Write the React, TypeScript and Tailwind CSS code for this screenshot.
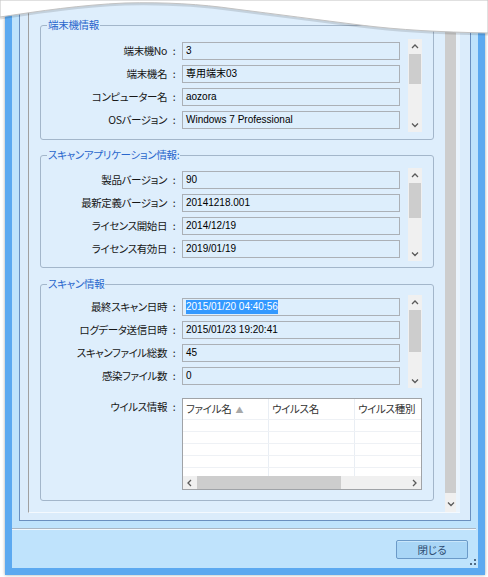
import React from "react";

const JP = "font-['Noto_Sans_CJK_JP',sans-serif] [font-feature-settings:'palt']";
const LABEL = `${JP} text-[10.5px] leading-[18px] tracking-[-0.4px] text-[#161616] whitespace-nowrap`;
const VALUE = "font-['Liberation_Sans','Noto_Sans_CJK_JP',sans-serif] text-[10px] leading-[14px] whitespace-nowrap";

type Dir = "up" | "down" | "left" | "right";

const Chevron: React.FC<{ dir: Dir }> = ({ dir }) => {
    const pts = {
        up: "1,5 4,2 7,5",
        down: "1,2.5 4,5.5 7,2.5",
        left: "5,1 2,4 5,7",
        right: "3,1 6,4 3,7",
    }[dir];
    return (
        <svg width="8" height="8" viewBox="0 0 8 8">
            <polyline points={pts} fill="none" stroke="#5a5a5a" strokeWidth="1.3" />
        </svg>
    );
};

// small vertical scrollbar next to the rows of a group
const MiniScroll: React.FC<{ thumb: string }> = ({ thumb }) => (
    <div className="-my-[3px] ml-[8px] flex w-[14px] flex-col bg-[#f0f0f0]">
        <div className="flex h-[15px] items-center justify-center"><Chevron dir="up" /></div>
        <div className={`mx-[1px] bg-[#cdcdcd] ${thumb}`} />
        <div className="flex-1" />
        <div className="flex h-[15px] items-center justify-center"><Chevron dir="down" /></div>
    </div>
);

const Field: React.FC<{ label: string; value: string; selected?: boolean }> = ({ label, value, selected }) => (
    <div className="flex h-[18px] items-center">
        <span className={`w-[126px] text-right ${LABEL}`}>{label}</span>
        <span className={`w-[14px] text-center ${LABEL}`}>:</span>
        <div className="ml-[1px] flex h-[18px] w-[218px] items-center border border-[#abb0b6] bg-[#ddeefc] pl-[3px]">
            <span className={`${VALUE} ${selected ? "bg-[#3399ff] text-white" : "text-black"}`}>{value}</span>
        </div>
    </div>
);

const Group: React.FC<{ title: string; className?: string; children: React.ReactNode }> = ({ title, className, children }) => (
    <fieldset className={`mx-[11px] rounded-[3px] border border-[#a3b6ca] ${className ?? ""}`}>
        <legend className={`ml-[6px] px-[1px] text-[10.5px] leading-[14px] tracking-[-0.3px] text-[#2a67cc] ${JP}`}>{title}</legend>
        {children}
    </fieldset>
);

const VirusTable: React.FC = () => {
    const cols = "w-[86px] shrink-0 border-r border-[#e9eef4]";
    return (
        <div className="ml-[1px] flex h-[92px] w-[240px] flex-col border border-[#a0a3a7] bg-white">
            <div className={`flex h-[21px] border-b border-[#eef1f5] text-[10.5px] leading-[20px] tracking-[-0.3px] text-[#333] ${JP}`}>
                <div className={`${cols} pl-[3px]`}>
                    ファイル名 <span className="ml-[2px] text-[8px] text-[#a8a8a8]">▲</span>
                </div>
                <div className={`${cols} pl-[3px]`}>ウイルス名</div>
                <div className="flex-1 overflow-hidden whitespace-nowrap pl-[3px]">ウイルス種別</div>
            </div>
            {[0, 1, 2, 3].map(i => (
                <div key={i} className="flex h-[12px] border-b border-[#eef1f5]">
                    <div className={cols} />
                    <div className={cols} />
                </div>
            ))}
            <div className="flex h-[8px]">
                <div className={cols} />
                <div className={cols} />
            </div>
            <div className="flex h-[13px] items-center bg-[#f0f0f0]">
                <div className="flex w-[14px] justify-center"><Chevron dir="left" /></div>
                <div className="h-[13px] w-[144px] bg-[#cdcdcd]" />
                <div className="flex-1" />
                <div className="flex w-[14px] justify-center"><Chevron dir="right" /></div>
            </div>
        </div>
    );
};

const App: React.FC = () => {
    return (
        <div className="relative h-[577px] w-[488px] overflow-hidden bg-white">

            <div className="relative ml-[5px] h-[575px] w-[480px] border-x-[7px] border-b-[7px] border-[#5ca9f0] bg-[#bfe3fc] px-[7px] shadow-[0_0_3px_rgba(0,0,0,0.35)]">

                {/* content panel */}
                <div className="flex h-[521px] items-start border-x border-b border-[#6a8fbf] bg-[#dbecfb] pl-[8px] pr-[10px]">
                    <div className="flex h-[513px] border-b border-l border-b-[#f4f9fe] border-l-[#a0a0a0]">

                        <div className="h-[512px] w-[416px] bg-[#deeefc] pt-[18px]">
                            <Group title="端末機情報">
                                <div className="flex pb-[10px] pt-[10px]">
                                    <div className="flex flex-col gap-[5px]">
                                        <Field label="端末機No" value="3" />
                                        <Field label="端末機名" value="専用端末03" />
                                        <Field label="コンピューター名" value="aozora" />
                                        <Field label="OSバージョン" value="Windows 7 Professional" />
                                    </div>
                                    <MiniScroll thumb="h-[30px]" />
                                </div>
                            </Group>

                            <Group title="スキャンアプリケーション情報:" className="mt-[8px]">
                                <div className="flex pb-[9px] pt-[9px]">
                                    <div className="flex flex-col gap-[5px]">
                                        <Field label="製品バージョン" value="90" />
                                        <Field label="最新定義バージョン" value="20141218.001" />
                                        <Field label="ライセンス開始日" value="2014/12/19" />
                                        <Field label="ライセンス有効日" value="2019/01/19" />
                                    </div>
                                    <MiniScroll thumb="h-[35px]" />
                                </div>
                            </Group>

                            <Group title="スキャン情報" className="mt-[9px]">
                                <div className="pb-[10px] pt-[7px]">
                                    <div className="flex">
                                        <div className="flex flex-col gap-[5px]">
                                            <Field label="最終スキャン日時" value="2015/01/20 04:40:56" selected />
                                            <Field label="ログデータ送信日時" value="2015/01/23 19:20:41" />
                                            <Field label="スキャンファイル総数" value="45" />
                                            <Field label="感染ファイル数" value="0" />
                                        </div>
                                        <MiniScroll thumb="h-[42px]" />
                                    </div>
                                    <div className="mt-[13px] flex items-start">
                                        <span className={`w-[126px] text-right ${LABEL}`}>ウイルス情報</span>
                                        <span className={`w-[14px] text-center ${LABEL}`}>:</span>
                                        <VirusTable />
                                    </div>
                                </div>
                            </Group>
                        </div>

                        {/* main vertical scrollbar */}
                        <div className="flex w-[11px] flex-col bg-[#f0f0f0]">
                            <div className="h-[493px] bg-[#cdcdcd]" />
                            <div className="flex flex-1 items-end justify-center pb-[4px]"><Chevron dir="down" /></div>
                        </div>
                        <div className="w-[4px] bg-[#eaf4fd]" />
                    </div>
                </div>

                {/* footer */}
                <div className="-mx-[7px]">
                    <div className="mr-[2px] mt-[7px] h-[1px] bg-[#a9b6c3]" />
                    <div className="mr-[2px] h-[1px] bg-[#f2f8fe]" />
                    <div className="mt-[10px] flex justify-end pr-[10px]">
                        <button className={`h-[19px] w-[72px] rounded-[2px] border border-[#6b9ac8] bg-[#a9d6f6] text-[10.5px] leading-[16px] text-[#2a4a70] shadow-[inset_0_1px_0_#c9e7fb] ${JP}`}>
                            閉じる
                        </button>
                    </div>
                </div>

                <svg className="absolute bottom-[3px] right-[2px]" width="6" height="6" viewBox="0 0 6 6">
                    <rect x="4" y="0" width="2" height="2" fill="#4e6a86" />
                    <rect x="0" y="4" width="2" height="2" fill="#4e6a86" />
                    <rect x="4" y="4" width="2" height="2" fill="#4e6a86" />
                </svg>
            </div>

            {/* torn top edge */}
            <svg className="absolute left-0 top-0" width="488" height="40" viewBox="0 0 488 40">
                <path
                    d="M0,17 C40,11 80,5 125,3 C165,2 200,4 235,9 C275,14 320,20 360,25 C400,30 440,32 488,33"
                    fill="none"
                    stroke="#000"
                    strokeOpacity="0.12"
                    strokeWidth="3"
                    transform="translate(0,1)"
                />
                <path
                    d="M0,0 H488 V33 C440,32 400,30 360,25 C320,20 275,14 235,9 C200,4 165,2 125,3 C80,5 40,11 0,17 Z"
                    fill="#ffffff"
                    stroke="#c2c2c2"
                    strokeWidth="1"
                />
            </svg>
        </div>
    );
};

export default App;
